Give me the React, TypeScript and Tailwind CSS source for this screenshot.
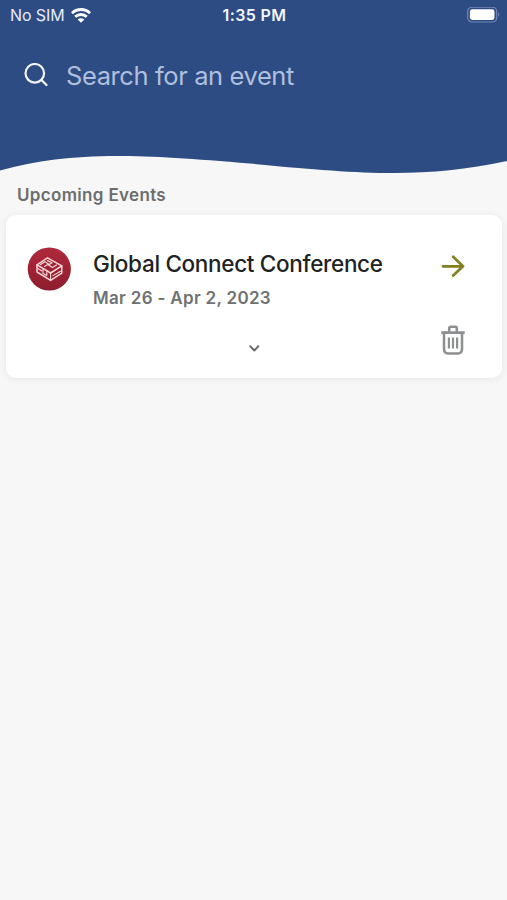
import React from "react";

function WifiIcon() {
  return (
    <svg className="ml-[6px] h-[15px] w-5" viewBox="0 0 20 15" fill="none" stroke="#fff" strokeWidth="2.9">
      <path d="M1 5.2C6 .3 14 .3 19 5.2" />
      <path d="M4.2 8.8C7.6 5.7 12.4 5.7 15.8 8.8" />
      <path d="M10 14.7L6.7 11.5C8.5 9.9 11.5 9.9 13.3 11.5Z" fill="#fff" stroke="none" />
    </svg>
  );
}

function BatteryIcon() {
  return (
    <svg className="h-4 w-[33px]" viewBox="0 0 33 16" fill="none">
      <rect x=".7" y=".2" width="29" height="14.8" rx="4.2" stroke="#7486b6" strokeWidth="1.2" />
      <rect x="2.9" y="2.3" width="24.6" height="10.6" rx="2.4" fill="#fff" />
      <path d="M31.2 5.3C32.7 6 32.7 9 31.2 9.7Z" fill="#7486b6" />
    </svg>
  );
}

function EventLogo() {
  return (
    <svg className="h-11 w-11 shrink-0" viewBox="0 0 44 44" fill="none">
      <defs>
        <linearGradient id="badge" x1="0" y1="0" x2="0" y2="1">
          <stop offset="0" stopColor="#b0293d" />
          <stop offset="1" stopColor="#8d1d2c" />
        </linearGradient>
      </defs>
      <circle cx="22.3" cy="22" r="21.6" fill="url(#badge)" />
      <g stroke="#f6d5d8" strokeWidth="1.5" strokeLinejoin="round" strokeLinecap="round">
        <path d="M10 17.8L20.5 10.8L34.8 18.8V26.2L23.6 33.4L10 25Z" />
        <path d="M10 17.8L23.6 26L34.8 18.8" />
        <path d="M23.6 26V33.4M26 28.6L33.5 24.2M11 21.5L15 24" strokeWidth="1.1" />
        <path d="M13.5 17.6L18 14.8L21.5 17L17.5 19.4M20.5 13.6L25 15.8L21.5 18L25.5 20.4L29.5 18" strokeWidth="1.2" />
        <path d="M16 21.8V26.4L19.8 28.6V24.2" strokeWidth="1.1" />
      </g>
    </svg>
  );
}

function TrashIcon() {
  return (
    <svg className="h-[30px] w-6" viewBox="0 0 24 30" fill="none" stroke="#8d8f90" strokeWidth="2.5">
      <path d="M.3 7.6H23.7" strokeWidth="2.8" />
      <path d="M8.2 6.7V3.4C8.2 2.4 8.8 1.8 9.8 1.8H14.2C15.2 1.8 15.8 2.4 15.8 3.4V6.7" />
      <path d="M3 8V24C3 26.8 4.5 28.4 7 28.4H17C19.5 28.4 21 26.8 21 24V8" />
      <path d="M7.9 12.5V23.6M12 12.5V23.6M16.1 12.5V23.6" strokeWidth="2.2" />
    </svg>
  );
}

function Header() {
  return (
    <header>
      <div className="h-[150px] bg-[#2d4c84]">
        <div className="grid h-[30px] grid-cols-3 items-center pr-[7px] pl-[10px] text-white">
          <div className="flex items-center">
            <span className="text-[16px] leading-5 tracking-[-0.1px] whitespace-nowrap text-[#e5ebf7]">No SIM</span>
            <WifiIcon />
          </div>
          <span className="-ml-px text-center text-[16px] leading-5 font-semibold tracking-[0.4px] whitespace-nowrap text-[#f3f6fc]">1:35 PM</span>
          <div className="flex justify-end">
            <BatteryIcon />
          </div>
        </div>
        <div className="mt-[25px] flex h-10 items-center pl-6">
          <svg className="h-6 w-6" viewBox="0 0 24 24" fill="none" stroke="#f2f5fb" strokeWidth="2.2" strokeLinecap="round">
            <circle cx="10.8" cy="10.3" r="9.3" />
            <path d="M17.5 17L22.5 22" />
          </svg>
          <span className="ml-[18px] pt-px text-[25.5px] leading-10 tracking-[-0.4px] whitespace-nowrap text-[#b0bfdd]">Search for an event</span>
        </div>
      </div>
      <svg className="block h-[25px] w-full" viewBox="0 0 507 25" preserveAspectRatio="none">
        <path d="M0 0H507V11C425 28 370 25 250 13.5C120 2 65 3 0 20.5Z" fill="#2d4c84" />
      </svg>
    </header>
  );
}

function EventCard() {
  return (
    <article className="mr-[5px] ml-[6px] mt-[8px] flex h-[163px] rounded-[10px] bg-white pl-[21px] shadow-[0_1px_8px_rgba(0,0,0,0.07)]">
      <div className="pt-8">
        <EventLogo />
      </div>
      <div className="ml-[22px] w-[310px] pt-[33px]">
        <h2 className="text-[22.5px] leading-8 font-medium tracking-[-0.32px] whitespace-nowrap text-[#202223]">Global Connect Conference</h2>
        <p className="mt-[6px] text-[17px] leading-6 font-semibold tracking-[0.32px] whitespace-nowrap text-[#707172]">Mar 26 - Apr 2, 2023</p>
        <svg className="mt-[35px] ml-[156px] h-[7px] w-[11px]" viewBox="0 0 11 7" fill="none" stroke="#656667" strokeWidth="1.9" strokeLinecap="round" strokeLinejoin="round">
          <path d="M1.2 1.2L5.3 5.5L9.4 1.2" />
        </svg>
      </div>
      <div className="ml-[38px] flex flex-col items-center pt-[40px]">
        <svg className="h-[22px] w-6" viewBox="0 0 24 22" fill="none" stroke="#808022" strokeWidth="2.7" strokeLinecap="round" strokeLinejoin="round">
          <path d="M2 11.3H22M12.2 1.7L22 11.3L12.2 20.6" />
        </svg>
        <div className="mt-[48px]">
          <TrashIcon />
        </div>
      </div>
    </article>
  );
}

export default function App() {
  return (
    <main className="h-[900px] w-full overflow-hidden bg-[#f7f7f7] font-['Inter','Liberation_Sans',sans-serif]">
      <Header />
      <h1 className="mt-[8px] pl-[17px] text-[17px] leading-6 font-semibold tracking-[0.33px] whitespace-nowrap text-[#6c6d6e]">Upcoming Events</h1>
      <EventCard />
    </main>
  );
}
